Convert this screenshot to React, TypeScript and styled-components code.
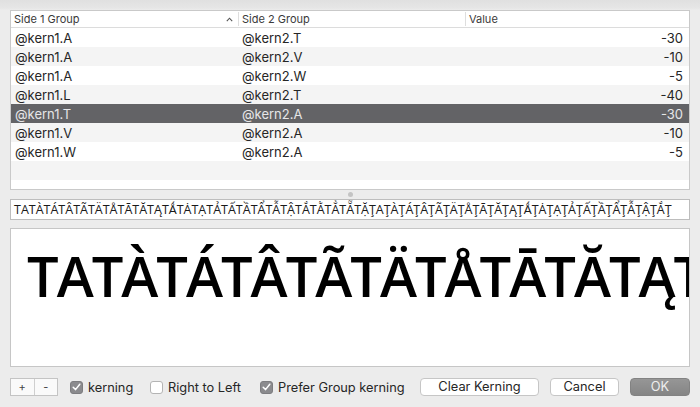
import React from "react";
import styled, { createGlobalStyle } from "styled-components";

const GlobalStyle = createGlobalStyle`
  html, body {
    margin: 0;
    padding: 0;
    background: #ececec;
  }
  body {
    font-family: "Inter", "Liberation Sans", sans-serif;
    -webkit-font-smoothing: antialiased;
  }
`;

const Window = styled.div`
  width: 700px;
  height: 407px;
  box-sizing: border-box;
  padding: 10px 10px 0 10px;
  display: flex;
  flex-direction: column;
  background: linear-gradient(to bottom, #e0e0e0 0px, #e6e6e6 8px, #ececec 10px, #ececec 100%);
  overflow: hidden;
`;

const Table = styled.div`
  height: 180px;
  box-sizing: border-box;
  border: 1px solid #c9c9c9;
  background: #ffffff;
  overflow: hidden;
  display: flex;
  flex-direction: column;
`;

const HeaderRow = styled.div`
  display: grid;
  grid-template-columns: 227px 227px 1fr;
  height: 16px;
  border-bottom: 1px solid #dcdcdc;
  background: #ffffff;
  font-size: 11px;
  color: #3a3a3a;
  flex-shrink: 0;
`;

const HeaderCell = styled.div<{ $first?: boolean }>`
  display: flex;
  align-items: center;
  justify-content: space-between;
  padding: 0 4px 0 3px;
  border-left: ${(p) => (p.$first ? "none" : "1px solid #dedede")};
  margin: ${(p) => (p.$first ? "0" : "1px 0")};
`;

const SortArrow = styled.svg`
  width: 7px;
  height: 5px;
  margin-right: 1px;
`;

const Row = styled.div<{ $stripe: boolean; $selected?: boolean }>`
  display: grid;
  grid-template-columns: 227px 228px 1fr;
  height: 19px;
  flex-shrink: 0;
  align-items: center;
  font-size: 13px;
  color: ${(p) => (p.$selected ? "#e6e6e8" : "#262626")};
  background: ${(p) =>
    p.$selected ? "#636366" : p.$stripe ? "#f4f4f4" : "#ffffff"};
`;

const Cell = styled.div<{ $right?: boolean }>`
  padding: 0 6px 0 4px;
  text-align: ${(p) => (p.$right ? "right" : "left")};
  white-space: nowrap;
`;

const Splitter = styled.div`
  height: 9px;
  display: flex;
  align-items: center;
  justify-content: center;
`;

const SplitDot = styled.div`
  width: 5px;
  height: 5px;
  border-radius: 50%;
  background: #c4c4c4;
`;

const SampleField = styled.div`
  height: 21px;
  box-sizing: border-box;
  border: 1px solid #bdbdbd;
  background: #ffffff;
  font-family: "Open Sans", "Noto Sans", sans-serif;
  font-size: 12.5px;
  line-height: 19px;
  padding: 0 3px;
  color: #1a1a1a;
  white-space: nowrap;
  overflow: hidden;
`;

const Preview = styled.div`
  margin-top: 8px;
  height: 139px;
  box-sizing: border-box;
  border: 1px solid #c6c6c6;
  background: #ffffff;
  overflow: hidden;
  padding: 18px 0 0 16px;
`;

const PreviewText = styled.div`
  font-family: "Open Sans", "Noto Sans", sans-serif;
  font-size: 56px;
  font-weight: 600;
  letter-spacing: -2px;
  line-height: 56px;
  color: #000000;
  white-space: nowrap;
`;

const BottomBar = styled.div`
  margin-top: 11px;
  height: 18px;
  display: flex;
  align-items: center;
`;

const Segmented = styled.div`
  display: flex;
  width: 48px;
  height: 18px;
  box-sizing: border-box;
  border: 1px solid #c4c4c4;
  background: #fafafa;
  margin-right: 12px;
  flex-shrink: 0;
`;

const SegButton = styled.button<{ $divider?: boolean }>`
  flex: 1;
  height: 100%;
  padding: 0;
  border: none;
  border-left: ${(p) => (p.$divider ? "1px solid #cfcfcf" : "none")};
  background: transparent;
  font-family: "Inter", sans-serif;
  font-size: 11px;
  color: #444;
  line-height: 14px;
`;

const CheckLabel = styled.label<{ $width: number }>`
  display: flex;
  align-items: center;
  width: ${(p) => p.$width}px;
  flex-shrink: 0;
  font-size: 12.8px;
  color: #262626;
  gap: 5px;
  white-space: nowrap;
`;

const Box = styled.span<{ $checked: boolean }>`
  width: 13px;
  height: 13px;
  flex-shrink: 0;
  box-sizing: border-box;
  border-radius: 3px;
  display: flex;
  align-items: center;
  justify-content: center;
  background: ${(p) => (p.$checked ? "#8b8b8e" : "#ffffff")};
  border: 1px solid ${(p) => (p.$checked ? "#7d7d80" : "#b4b4b4")};
`;

const PushButton = styled.button<{ $primary?: boolean; $width: number; $gap: number }>`
  width: ${(p) => p.$width}px;
  height: 18px;
  margin-left: ${(p) => p.$gap}px;
  flex-shrink: 0;
  box-sizing: border-box;
  border-radius: 4px;
  padding: 0;
  font-family: "Inter", sans-serif;
  font-size: 12.8px;
  line-height: 16px;
  white-space: nowrap;
  border: 1px solid ${(p) => (p.$primary ? "#828282" : "#c6c6c6")};
  color: ${(p) => (p.$primary ? "#eeeeee" : "#262626")};
  background: ${(p) =>
    p.$primary ? "linear-gradient(#969696, #858585)" : "#ffffff"};
`;

const rows = [
  ["@kern1.A", "@kern2.T", "-30"],
  ["@kern1.A", "@kern2.V", "-10"],
  ["@kern1.A", "@kern2.W", "-5"],
  ["@kern1.L", "@kern2.T", "-40"],
  ["@kern1.T", "@kern2.A", "-30"],
  ["@kern1.V", "@kern2.A", "-10"],
  ["@kern1.W", "@kern2.A", "-5"],
  ["", "", ""],
  ["", "", ""],
];

const aVariants = [
  "A", "À", "Á", "Â", "Ã", "Ä", "Å", "Ā", "Ă", "Ą", "Ǻ", "Ȧ", "Ạ", "Ả",
  "Ấ", "Ầ", "Ẩ", "Ẫ", "Ậ", "Ắ", "Ằ", "Ẳ", "Ẵ", "Ặ",
];

// the field shows the whole T row and most of the Ţ row
const fieldText =
  aVariants.map((a) => "T" + a).join("") +
  aVariants.slice(0, 20).map((a) => "Ţ" + a).join("") +
  "Ţ";

// the preview only fits the first ten pairs
const previewText = aVariants.slice(0, 10).map((a) => "T" + a).join("") + "T";

const Check = () => (
  <svg width="9" height="8" viewBox="0 0 9 8">
    <path d="M1.2 4.2 L3.5 6.6 L7.8 1.2" fill="none" stroke="#ffffff" strokeWidth="1.5" strokeLinecap="round" strokeLinejoin="round" />
  </svg>
);

const CheckBox = ({ checked, label, width }: { checked: boolean; label: string; width: number }) => (
  <CheckLabel $width={width}>
    <Box $checked={checked}>{checked && <Check />}</Box>
    {label}
  </CheckLabel>
);

const App = () => {
  return (
    <>
      <GlobalStyle />
      <Window>
        <Table>
          <HeaderRow>
            <HeaderCell $first>
              <span>Side 1 Group</span>
              <SortArrow viewBox="0 0 7 5">
                <path d="M0.8 4.2 L3.5 1.2 L6.2 4.2" fill="none" stroke="#555" strokeWidth="1.1" />
              </SortArrow>
            </HeaderCell>
            <HeaderCell>Side 2 Group</HeaderCell>
            <HeaderCell>Value</HeaderCell>
          </HeaderRow>
          {rows.map((r, i) => (
            <Row key={i} $stripe={i % 2 === 1} $selected={i === 4}>
              <Cell>{r[0]}</Cell>
              <Cell>{r[1]}</Cell>
              <Cell $right>{r[2]}</Cell>
            </Row>
          ))}
        </Table>

        <Splitter>
          <SplitDot />
        </Splitter>

        <SampleField>{fieldText}</SampleField>

        <Preview>
          <PreviewText>{previewText}</PreviewText>
        </Preview>

        <BottomBar>
          <Segmented>
            <SegButton>+</SegButton>
            <SegButton $divider>-</SegButton>
          </Segmented>
          <CheckBox checked label="kerning" width={80} />
          <CheckBox checked={false} label="Right to Left" width={110} />
          <CheckBox checked label="Prefer Group kerning" width={150} />
          <PushButton $width={119} $gap={10}>Clear Kerning</PushButton>
          <PushButton $width={69} $gap={11}>Cancel</PushButton>
          <PushButton $width={60} $gap={11} $primary>OK</PushButton>
        </BottomBar>
      </Window>
    </>
  );
};

export default App;
